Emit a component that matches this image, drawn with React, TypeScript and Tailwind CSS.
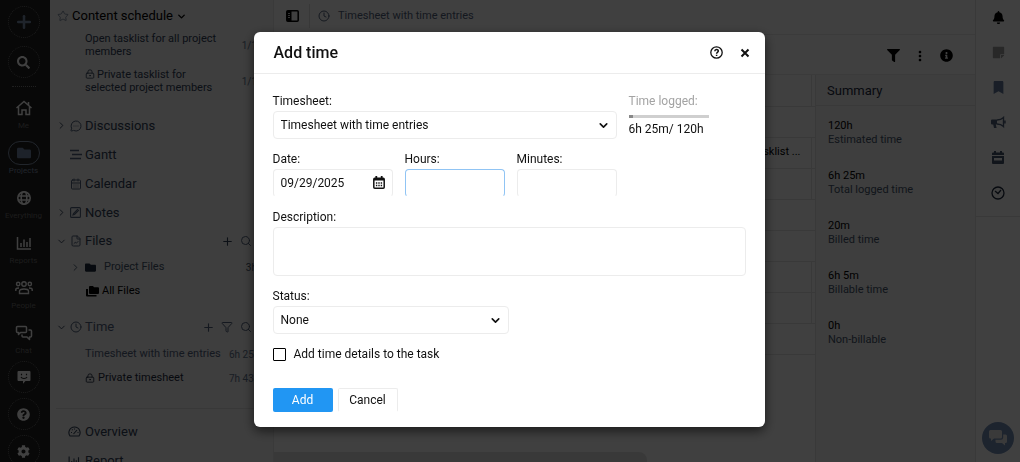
import React from "react";
import {
  CalendarDays,
  ChevronDown,
  ChevronRight,
  Clock,
  FileChartLine,
  Funnel,
  LockKeyhole,
  MessageCircleMore,
  Plus,
  Search,
  Star,
} from "lucide-react";
import {
  FaBell,
  FaBookmark,
  FaCog,
  FaFilter,
  FaFolder,
  FaInfoCircle,
  FaQuestionCircle,
  FaSearch,
  FaStickyNote,
} from "react-icons/fa";
import { MdMoreVert } from "react-icons/md";

const HomeIcon = () => (
  <svg width="18" height="16" viewBox="0 0 18 16" fill="none" stroke="currentColor" strokeWidth="1.5">
    <path d="M1.5 8 9 1.5 16.500 8M3.500 6.500v8h3.500v-4.500h4v4.500h3.500v-8M13.500 5V2" />
  </svg>
);

const GlobeIcon = () => (
  <svg width="16" height="16" viewBox="0 0 16 16" fill="none" stroke="currentColor" strokeWidth="1.6">
    <circle cx="8" cy="8" r="6.200" />
    <ellipse cx="8" cy="8" rx="2.800" ry="6.200" />
    <path d="M2 6h12M2 10h12" />
  </svg>
);

const ReportIcon = ({ size = 16 }) => (
  <svg width={size} height={size} viewBox="0 0 16 16" fill="none" stroke="currentColor" strokeWidth="1.5">
    <path d="M1.500 2v12H15M5 12V8M8 12V4.500M11 12V7M14 12V3" />
  </svg>
);

const PeopleIcon = () => (
  <svg width="18" height="16" viewBox="0 0 18 16" fill="none" stroke="currentColor" strokeWidth="1.400">
    <circle cx="3.200" cy="4" r="1.700" />
    <circle cx="9" cy="4" r="2.200" />
    <circle cx="14.800" cy="4" r="1.700" />
    <path d="M.8 11V9.500C.8 8.400 2 8 4 8M17.200 11V9.500C17.200 8.400 16 8 14 8M4.500 13.500v-2.300C4.500 9.600 6 9 9 9s4.500.6 4.500 2.200v2.300z" />
  </svg>
);

const ChatIcon = () => (
  <svg width="18" height="16" viewBox="0 0 18 16" fill="none" stroke="currentColor" strokeWidth="1.500" strokeLinejoin="round">
    <path d="M2.500 1.500h8a1 1 0 0 1 1 1v4a1 1 0 0 1-1 1H5.500L3.500 9.500v-2h-1a1 1 0 0 1-1-1v-4a1 1 0 0 1 1-1z" />
    <path d="M13.500 5h2a1 1 0 0 1 1 1v5a1 1 0 0 1-1 1h-1v2.500L12 12H8a1 1 0 0 1-1-1v-1.500" />
  </svg>
);

const SmileIcon = () => (
  <svg width="14" height="14" viewBox="0 0 14 14">
    <path d="M1.500 1h11a1 1 0 0 1 1 1v8a1 1 0 0 1-1 1H8.500L6 13.800V11H1.500a1 1 0 0 1-1-1V2a1 1 0 0 1 1-1z" fill="currentColor" />
    <path d="M4.500 3.800v1.400M9.500 3.800v1.400M4 7c1 2 5 2 6 0" fill="none" stroke="#202020" strokeWidth="1.200" />
  </svg>
);

const GanttIcon = () => (
  <svg width="12" height="11" viewBox="0 0 12 11" stroke="currentColor" strokeWidth="1.300">
    <path d="M0 1.500h9M2 5.500h10M0 9.500h11" />
  </svg>
);

const NoteIcon = () => (
  <svg width="11" height="11" viewBox="0 0 11 11" fill="none" stroke="currentColor" strokeWidth="1.100">
    <rect x=".6" y=".6" width="9.800" height="9.800" rx="1" />
    <path d="M3 8l.5-1.500L7.500 2.500l1 1L4.500 7.500z" />
  </svg>
);

const GaugeIcon = () => (
  <svg width="13" height="11" viewBox="0 0 13 11" fill="none" stroke="currentColor" strokeWidth="1.100">
    <path d="M2 10C-.5 6.500 1.500 1 6.500 1S13.500 6.500 11 10z" />
    <path d="M5.500 8 9 4M3 6.500h1M4 3.500l.6.600M6.500 2.500v1M9.500 6.500h1" />
  </svg>
);

const FoldersIcon = () => (
  <svg width="13" height="11" viewBox="0 0 13 11" fill="currentColor">
    <path d="M4 0h3l1 1.200h4a1 1 0 0 1 1 1V7a1 1 0 0 1-1 1H4a1 1 0 0 1-1-1V1a1 1 0 0 1 1-1z" />
    <path d="M0 3h2v6h8.500v1.500H1a1 1 0 0 1-1-1z" />
  </svg>
);

const PanelIcon = () => (
  <svg width="13" height="12" viewBox="0 0 13 12">
    <rect x=".8" y=".8" width="11.400" height="10.400" rx="1" fill="none" stroke="currentColor" strokeWidth="1.500" />
    <path d="M1 1h4.500v10H1z" fill="currentColor" />
    <path d="M2 3.500h2M2 5.500h2M2 7.500h2" stroke="#fff" strokeWidth=".8" />
  </svg>
);

const MegaphoneIcon = () => (
  <svg width="15" height="13" viewBox="0 0 15 13">
    <path d="M1 3.500h5v5H4.800l.8 3.500H3l-.8-3.500H1a1 1 0 0 1-1-1v-3a1 1 0 0 1 1-1z" fill="currentColor" />
    <path d="M6 4c3 0 5-1 6.500-2.500v9C11 9 9 8 6 8M14 4.500v3" fill="none" stroke="currentColor" strokeWidth="1.400" />
  </svg>
);

const PlannerIcon = () => (
  <svg width="12" height="13" viewBox="0 0 12 13" fill="currentColor">
    <path d="M2 0h2v1.500h4V0h2v1.500h1a1 1 0 0 1 1 1V4H0V2.500a1 1 0 0 1 1-1h1z" />
    <path fillRule="evenodd" d="M0 5h12v7a1 1 0 0 1-1 1H1a1 1 0 0 1-1-1zM2 7v2.500h8V7z" />
  </svg>
);

const TimerIcon = () => (
  <svg width="14" height="14" viewBox="0 0 14 14" fill="none" stroke="currentColor" strokeWidth="1.300">
    <circle cx="7" cy="7" r="6" />
    <path d="M4 5l3 2.500L10 4" />
  </svg>
);

const BubblesIcon = () => (
  <svg width="18" height="16" viewBox="0 0 18 16" fill="currentColor">
    <path d="M1.500 0h10A1.500 1.500 0 0 1 13 1.500V7a1.500 1.500 0 0 1-1.500 1.500H5L2 11V8.500h-.5A1.500 1.500 0 0 1 0 7V1.500A1.500 1.500 0 0 1 1.500 0z" />
    <path d="M14.200 4.500h2.300A1.500 1.500 0 0 1 18 6v5.500a1.500 1.500 0 0 1-1.500 1.500H16v2.500L13 13H8a1.500 1.500 0 0 1-1.500-1.500V9.700H12a2.200 2.200 0 0 0 2.200-2.200z" />
  </svg>
);

const HelpIcon = () => (
  <svg width="13" height="13" viewBox="0 0 13 13" fill="none" stroke="currentColor">
    <circle cx="6.500" cy="6.500" r="5.700" strokeWidth="1.300" />
    <path d="M4.800 5.200c0-2.300 3.500-2.300 3.500-.1 0 1.400-1.700 1.300-1.700 2.600M6.600 8.700v1.300" strokeWidth="1.500" />
  </svg>
);

const CloseIcon = () => (
  <svg width="10" height="10" viewBox="0 0 10 10" stroke="currentColor" strokeWidth="2">
    <path d="M1.500 1.500l7 7M8.500 1.500l-7 7" />
  </svg>
);

const DateIcon = () => (
  <svg width="12" height="13" viewBox="0 0 12 13" fill="none" stroke="currentColor">
    <rect x=".8" y="2.300" width="10.400" height="9.900" rx="1" strokeWidth="1.500" />
    <path d="M1 3.300h10" strokeWidth="2.400" />
    <path d="M3.300 0v2.500M8.700 0v2.500" strokeWidth="1.800" />
    <path d="M2.900 7h1.400M5.300 7h1.400M7.700 7h1.400M2.900 9.500h1.400M5.300 9.500h1.400M7.700 9.500h1.400" strokeWidth="1.400" />
  </svg>
);

const railItems = [
  { title: "Me", icon: <HomeIcon /> },
  { title: "Projects", icon: <FaFolder size={14} />, active: true },
  { title: "Everything", icon: <GlobeIcon /> },
  { title: "Reports", icon: <ReportIcon /> },
  { title: "People", icon: <PeopleIcon /> },
  { title: "Chat", icon: <ChatIcon /> },
];

const railTools = [
  { title: "Feedback", icon: <SmileIcon /> },
  { title: "Help", icon: <FaQuestionCircle size={13} /> },
  { title: "Settings", icon: <FaCog size={13} /> },
];

const sections = [
  { title: "Discussions", icon: <MessageCircleMore size={12} />, open: true },
  { title: "Gantt", icon: <GanttIcon /> },
  { title: "Calendar", icon: <CalendarDays size={12} /> },
  { title: "Notes", icon: <NoteIcon />, open: true },
];

const summary = [
  { value: "120h", title: "Estimated time" },
  { value: "6h 25m", title: "Total logged time" },
  { value: "20m", title: "Billed time" },
  { value: "6h 5m", title: "Billable time" },
  { value: "0h", title: "Non-billable" },
];

const shortcuts = [
  { title: "Notifications", icon: <FaBell size={13} />, color: "text-black" },
  { title: "Stickies", icon: <FaStickyNote size={13} />, color: "text-[#a0a0a0]" },
  { title: "Bookmarks", icon: <FaBookmark size={13} />, color: "text-[#647a9c]" },
  { title: "Announcements", icon: <MegaphoneIcon />, color: "text-[#52627c]" },
  { title: "Planner", icon: <PlannerIcon />, color: "text-slate-600" },
  { title: "Timer", icon: <TimerIcon />, color: "text-slate-800" },
];

// split: the row has a separate last column
const rows = [
  { split: true, text: "" },
  { split: false, text: "" },
  { split: true, text: "tasklist ..." },
  { split: true, text: "" },
  { split: false, text: "" },
  { split: false, text: "" },
  { split: true, text: "" },
  { split: true, text: "" },
  { split: false, text: "" },
];

const Rail = () => (
  <nav className="flex w-[50px] shrink-0 flex-col items-center bg-[#202020] pr-[3px] pt-1.5 text-white">
    <button aria-label="Add" className="flex size-8 shrink-0 items-center justify-center rounded-full border border-dotted border-[#707070] text-[#7c90ac]">
      <Plus size={20} strokeWidth={3} />
    </button>
    <button aria-label="Search" className="mt-2 flex size-8 shrink-0 items-center justify-center rounded-full border border-dotted border-[#707070]">
      <FaSearch size={13} />
    </button>
    <div className="my-2 mb-[9px] w-6 border-t border-dotted border-[#808080]" />
    {railItems.map((item) => (
      <a key={item.title} href="#" className="mb-[9px] flex flex-col items-center">
        <span
          className={
            item.active
              ? "flex h-6 w-8 items-center justify-center rounded-full border border-[#8494ac] text-[#7488a8]"
              : "flex h-6 w-8 items-center justify-center"
          }
        >
          {item.icon}
        </span>
        <span className={item.active ? "text-[8px] leading-3 text-[#8494ac]" : "text-[8px] leading-3 text-[#707070]"}>
          {item.title}
        </span>
      </a>
    ))}
    <div className="-mt-[5px] flex flex-col gap-[5px]">
      {railTools.map((item) => (
        <button
          key={item.title}
          aria-label={item.title}
          className="flex size-8 shrink-0 items-center justify-center rounded-full border border-dotted border-[#707070]"
        >
          {item.icon}
        </button>
      ))}
    </div>
  </nav>
);

const Sidebar = () => (
  <aside className="flex w-[224px] shrink-0 flex-col border-r border-[#e8e8e8] bg-[#f5f5f5] text-[12px] text-slate-700">
    <div className="flex h-8 shrink-0 items-center gap-[3px] pl-[7px] text-black">
      <Star size={12} strokeWidth={1.5} className="text-slate-500" />
      <span className="text-[13px]">Content schedule</span>
      <ChevronDown size={11} strokeWidth={3} />
    </div>
    <div className="flex flex-col gap-2.5 pr-4 pl-[35px] text-[11px] leading-[13px]">
      <a href="#" className="flex items-center justify-between">
        <span className="w-36">Open tasklist for all project members</span>
        <span className="text-[10px] text-slate-500">1/1</span>
      </a>
      <a href="#" className="flex items-center justify-between">
        <span className="w-36">
          <LockKeyhole size={10} className="mr-0.5 mb-0.5 inline" />
          Private tasklist for selected project members
        </span>
        <span className="text-[10px] text-slate-500">1/1</span>
      </a>
    </div>
    <ul className="mt-[17px]">
      {sections.map((item) => (
        <li key={item.title} className="flex h-[29px] items-center pl-1.5">
          <span className="w-3.5">{item.open && <ChevronRight size={11} />}</span>
          <a href="#" className="flex items-center text-[13px]">
            <span className="w-[15px] text-[#52627c]">{item.icon}</span>
            {item.title}
          </a>
        </li>
      ))}
      <li className="flex h-[28px] items-center pl-1.5">
        <ChevronDown size={11} className="mr-[3px]" />
        <a href="#" className="flex flex-1 items-center text-[13px]">
          <FileChartLine size={12} className="mr-[3px] text-[#52627c]" />
          Files
        </a>
        <Plus size={13} className="mr-1.5" />
        <Search size={12} className="mr-[21px] text-[#52627c]" />
      </li>
      <li className="flex h-6 items-center gap-2 pl-5 text-[11px] text-slate-600">
        <ChevronRight size={11} />
        <FaFolder size={11} className="-ml-1 text-slate-800" />
        <a href="#" className="flex-1">Project Files</a>
        <span className="mr-4 text-[10px]">3h</span>
      </li>
      <li className="flex h-6 items-center gap-[3px] pl-9 text-[11px] text-black">
        <FoldersIcon />
        <a href="#">All Files</a>
      </li>
      <li className="mt-3 mb-[3px] flex h-6 items-center pl-1.5 text-[#52627c]">
        <ChevronDown size={11} className="mr-[3px] text-slate-700" />
        <a href="#" className="flex flex-1 items-center text-[13px]">
          <Clock size={12} className="mr-[3px]" />
          Time
        </a>
        <Plus size={13} className="mr-1.5" />
        <Funnel size={12} className="mr-[7px]" />
        <Search size={12} className="mr-[21px]" />
      </li>
      <li className="flex h-6 items-center justify-between pr-2 pl-[35px] text-[11px] text-[#52627c]">
        <a href="#">Timesheet with time entries</a>
        <span className="w-9 whitespace-nowrap text-[10px] text-slate-500">6h 25m</span>
      </li>
      <li className="flex h-6 items-center pr-2 pl-[35px] text-[11px] text-slate-800">
        <LockKeyhole size={10} className="mr-[3px]" />
        <a href="#" className="flex-1">Private timesheet</a>
        <span className="w-9 whitespace-nowrap text-[10px] text-slate-500">7h 43m</span>
      </li>
    </ul>
    <ul className="mx-1.5 mt-[18px] border-t border-[#e0e0e0] pt-2">
      <li className="flex h-[29px] items-center gap-1 pl-3">
        <GaugeIcon />
        <a href="#" className="text-[13px]">Overview</a>
      </li>
      <li className="flex h-[29px] items-center gap-[5px] pl-3">
        <ReportIcon size={12} />
        <a href="#" className="text-[13px]">Report</a>
      </li>
    </ul>
  </aside>
);

const Content = () => (
  <main className="flex min-w-0 flex-1 flex-col bg-white">
    <header className="flex h-[35px] shrink-0 items-center border-b border-[#ebebeb] pb-0.5">
      <span className="mr-2.5 ml-3"><PanelIcon /></span>
      <div className="mr-2 h-6 border-l border-[#e0e0e0]" />
      <Clock size={12} className="mr-2 text-[#52627c]" />
      <span className="text-[11px] text-[#52627c]">Timesheet with time entries</span>
    </header>
    <div className="flex h-10 shrink-0 items-center justify-end gap-3 border-b border-[#ebebeb] pt-0.5 pr-[22px]">
      <button aria-label="Filter"><FaFilter size={13} /></button>
      <button aria-label="More"><MdMoreVert size={16} /></button>
      <button aria-label="Info"><FaInfoCircle size={13} /></button>
    </div>
    <div className="flex min-h-0 flex-1">
      <div className="flex min-w-0 flex-1 flex-col justify-between">
        <table className="w-full text-[11px]">
          <tbody>
            {rows.map((row, index) => (
              <tr key={index} className="h-[31px] border-b border-[#e4e4e4]">
                <td className={row.split ? "border-r border-[#e4e4e4] pr-2.5 text-right" : "pr-2.5"}>{row.text}</td>
                <td className="w-1" />
              </tr>
            ))}
          </tbody>
        </table>
        <div className="h-2.5 w-[69%] rounded-tr-lg bg-[#e4e4e4]" />
      </div>
      <section className="w-40 shrink-0 border-l border-[#e4e4e4] bg-[#f5f5f5]">
        <h2 className="flex h-[31px] items-center border-b border-[#e4e4e4] pt-0.5 pl-[11px] text-[13px] text-slate-800">Summary</h2>
        <dl className="flex flex-col gap-[22px] pt-[13px] pl-3 text-[11px] leading-[14px]">
          {summary.map((item) => (
            <div key={item.title} className="flex flex-col-reverse">
              <dt className="text-slate-600">{item.title}</dt>
              <dd className="text-black">{item.value}</dd>
            </div>
          ))}
        </dl>
      </section>
    </div>
  </main>
);

const Shortcuts = () => (
  <aside className="flex w-[45px] shrink-0 flex-col items-center justify-between border-l border-[#e4e4e4] bg-white pb-2">
    <div className="flex w-full flex-col border-b border-[#e4e4e4] pb-1.5">
      {shortcuts.map((item) => (
        <button key={item.title} aria-label={item.title} className={`flex h-[35px] items-center justify-center ${item.color}`}>
          {item.icon}
        </button>
      ))}
    </div>
    <button aria-label="Messages" className="flex size-8 items-center justify-center rounded-full bg-[#7490b8] text-[#e8e8e8]">
      <BubblesIcon />
    </button>
  </aside>
);

const inputStyle = "h-7 w-full rounded border border-[#ececec] bg-white px-[7px] outline-none";

const AddTime = () => (
  <form
    role="dialog"
    aria-labelledby="dialog-title"
    onSubmit={(e) => e.preventDefault()}
    className="w-1/2 min-w-[511px] rounded-md bg-white text-[12px] leading-4 text-[#111] shadow-[0_4px_12px_rgba(0,0,0,0.6)]"
  >
    <header className="flex h-[42px] items-center border-b border-[#ececec] px-5">
      <h1 id="dialog-title" className="flex-1 text-[16px] font-medium">Add time</h1>
      <button type="button" aria-label="Help" className="mr-[17px]"><HelpIcon /></button>
      <button type="button" aria-label="Close" className="-mr-[5px]"><CloseIcon /></button>
    </header>
    <div className="flex flex-col gap-3 px-[19px] pt-[19px] pb-[15px]">
      <div className="flex gap-3">
        <div className="flex flex-1 flex-col gap-0.5">
          <label htmlFor="timesheet">Timesheet:</label>
          <div className="relative">
            <select id="timesheet" className={`${inputStyle} appearance-none`}>
              <option>Timesheet with time entries</option>
            </select>
            <ChevronDown size={13} strokeWidth={3} className="pointer-events-none absolute top-2 right-[7px]" />
          </div>
        </div>
        <div className="w-[117px]">
          <p className="text-[#a3a3a3]">Time logged:</p>
          <div className="mt-1.5 mb-[3px] h-[3px] w-20 bg-[#cfcfcf]">
            <div className="h-full w-1 bg-[#888]" />
          </div>
          <p>6h 25m/ 120h</p>
        </div>
      </div>
      <div className="mr-[129px] grid grid-cols-[6fr_5fr_5fr] gap-3">
        <div className="flex flex-col gap-0.5">
          <label htmlFor="date">Date:</label>
          <div className="relative">
            <input id="date" type="text" defaultValue="09/29/2025" className={`${inputStyle} border-b-transparent`} />
            <button type="button" aria-label="Pick a date" className="absolute top-[7px] right-2">
              <DateIcon />
            </button>
          </div>
        </div>
        <div className="flex flex-col gap-0.5">
          <label htmlFor="hours">Hours:</label>
          <input id="hours" type="text" className="h-7 w-full rounded border border-[#90c4f4] border-b-transparent px-2 outline-none" />
        </div>
        <div className="flex flex-col gap-0.5">
          <label htmlFor="minutes">Minutes:</label>
          <input id="minutes" type="text" className={`${inputStyle} border-b-transparent`} />
        </div>
      </div>
      <div className="flex flex-col gap-0.5">
        <label htmlFor="description">Description:</label>
        <textarea id="description" className="h-[49px] w-full resize-none rounded border border-[#ececec] px-2 py-1 outline-none" />
      </div>
      <div className="flex w-1/2 flex-col gap-0.5">
        <label htmlFor="status">Status:</label>
        <div className="relative">
          <select id="status" className={`${inputStyle} appearance-none`}>
            <option>None</option>
          </select>
          <ChevronDown size={13} strokeWidth={3} className="pointer-events-none absolute top-2 right-[7px]" />
        </div>
      </div>
      <div className="flex items-center gap-2">
        <input id="details" type="checkbox" className="size-[13px] appearance-none rounded-[1px] border-[1.5px] border-black checked:bg-[#2196f3]" />
        <label htmlFor="details">Add time details to the task</label>
      </div>
      <div className="mt-3.5 flex gap-[5px]">
        <button type="submit" className="h-6 w-[60px] rounded-xs bg-[#2196f3] text-white">Add</button>
        <button type="button" className="h-6 w-[60px] rounded-xs border border-[#ececec] border-b-transparent">Cancel</button>
      </div>
    </div>
  </form>
);

export default function App() {
  return (
    <div className="flex h-screen overflow-hidden font-['Roboto',sans-serif]">
      <Rail />
      <Sidebar />
      <Content />
      <Shortcuts />
      <div className="fixed inset-0 flex items-start justify-center bg-black/75 pt-8 pr-0.5">
        <AddTime />
      </div>
    </div>
  );
}
